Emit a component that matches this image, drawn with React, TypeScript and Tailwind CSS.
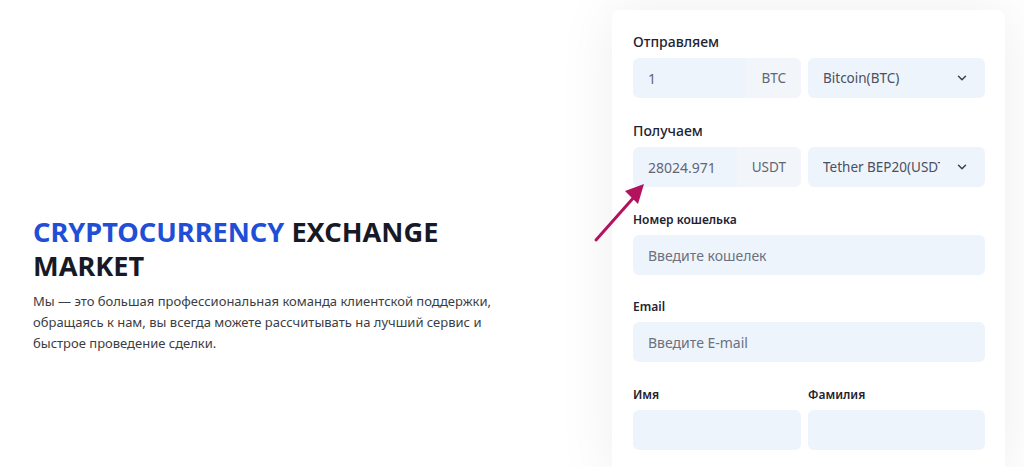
import React from 'react';
import { ChevronDown } from 'lucide-react';

function Label({ children, small }: { children: React.ReactNode; small?: boolean }) {
  return (
    <div
      className={
        small
          ? 'text-[12px] leading-[18px] font-semibold text-[#1f2330] mb-[6px]'
          : 'text-[14px] leading-[20px] font-medium text-[#1f2330] mb-[6px]'
      }
    >
      {children}
    </div>
  );
}

function AmountRow({ value, unit, coin }: { value: string; unit: string; coin: string }) {
  return (
    <div className="grid grid-cols-[168px_minmax(0,1fr)] gap-[7px] h-[40px]">
      <div className="flex rounded-[6px] overflow-hidden">
        <div className="flex-1 bg-[#eef4fc] flex items-center pl-[15px] text-[14px] text-[#5f6676]">{value}</div>
        <div className="bg-[#f2f5f9] flex items-center px-[15px] text-[13.5px] text-[#5f6676]">{unit}</div>
      </div>
      <div className="min-w-0 bg-[#eef4fc] rounded-[6px] flex items-center pl-[15px] pr-[16px] text-[13.5px] text-[#4a5060]">
        <span className="flex-1 min-w-0 overflow-hidden whitespace-nowrap">{coin}</span>
        <ChevronDown className="w-[14px] h-[14px] ml-[15px] shrink-0 text-[#3b3f4a]" strokeWidth={2.5} />
      </div>
    </div>
  );
}

function TextInput({ placeholder }: { placeholder?: string }) {
  return (
    <div className="h-[40px] bg-[#eef4fc] rounded-[6px] flex items-center pl-[15px] text-[14px] text-[#6b7180]">
      {placeholder}
    </div>
  );
}

export default function App() {
  return (
    <div className="w-[1024px] h-[467px] overflow-hidden bg-white flex relative" style={{ fontFamily: '"Noto Sans", "Open Sans", sans-serif' }}>
      {/* Left intro */}
      <div className="w-[560px] shrink-0 pl-[33px] pt-[215px]">
        <h1 className="text-[27.2px] leading-[34px] font-bold text-[#171a26]">
          <span className="text-[#1f4fd6]">CRYPTOCURRENCY</span> EXCHANGE
          <br />
          MARKET
        </h1>
        <p className="mt-[8px] text-[13px] leading-[21px] text-[#3b3d44] w-[475px]">
          Мы — это большая профессиональная команда клиентской поддержки, обращаясь к нам, вы всегда можете рассчитывать на лучший сервис и быстрое проведение сделки.
        </p>
      </div>

      {/* Exchange form */}
      <div className="w-[464px] shrink-0 min-w-0 pl-[52px] pr-[19px] pt-[10px]">
        <div className="bg-white rounded-[8px] shadow-[0_0_60px_rgba(0,0,0,0.07)] pt-[22px] pl-[21px] pr-[20px] pb-[30px]">
          <Label>Отправляем</Label>
          <AmountRow value="1" unit="BTC" coin="Bitcoin(BTC)" />

          <div className="mt-[23px]">
            <Label>Получаем</Label>
            <AmountRow value="28024.971" unit="USDT" coin="Tether BEP20(USDT)" />
          </div>

          <div className="mt-[24px]">
            <Label small>Номер кошелька</Label>
            <TextInput placeholder="Введите кошелек" />
          </div>

          <div className="mt-[23px]">
            <Label small>Email</Label>
            <TextInput placeholder="Введите E-mail" />
          </div>

          <div className="mt-[24px] grid grid-cols-[168px_minmax(0,1fr)] gap-[7px]">
            <div>
              <Label small>Имя</Label>
              <TextInput />
            </div>
            <div>
              <Label small>Фамилия</Label>
              <TextInput />
            </div>
          </div>
        </div>
      </div>

      {/* annotation arrow */}
      <svg className="absolute left-[590px] top-[176px]" width="64" height="70" viewBox="0 0 64 70">
        <line x1="6" y1="64" x2="45" y2="20" stroke="#b3125e" strokeWidth="3" strokeLinecap="round" />
        <polygon points="54,8 35,15 48,28" fill="#b3125e" />
      </svg>
    </div>
  );
}
